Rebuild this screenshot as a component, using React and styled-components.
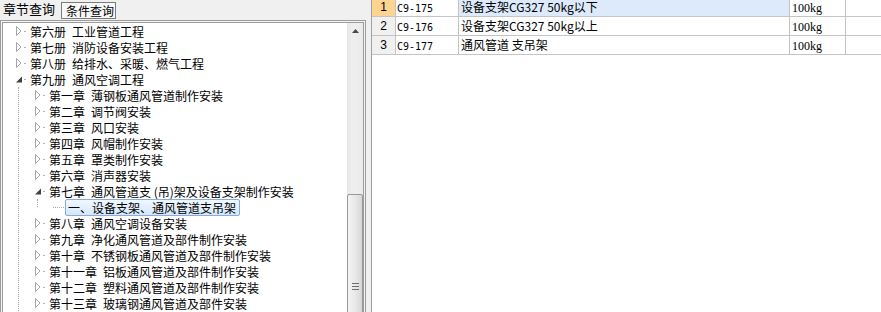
import React from "react";
import styled, { createGlobalStyle } from "styled-components";

const GlobalStyle = createGlobalStyle`
  html, body { margin: 0; padding: 0; background: #fff; }
  body {
    font-family: "Noto Sans CJK SC", sans-serif;
    font-size: 12px;
    color: #000;
  }
`;

const Screen = styled.div`
  display: flex;
  width: 881px;
  height: 312px;
  overflow: hidden;
  background: #f0f0f0;
`;

/* ---- left side: tabs + tree ---- */

const LeftPane = styled.div`
  width: 366px;
  flex-shrink: 0;
  display: flex;
  flex-direction: column;
`;

const TabStrip = styled.div`
  height: 20px;
  display: flex;
  align-items: flex-start;
  background: #f0f0f0;
`;

const Tab = styled.div`
  box-sizing: border-box;
  white-space: nowrap;
  ${(p) =>
    p.$active
      ? `
    width: 58px;
    height: 20px;
    padding-left: 3px;
    font-size: 13px;
    line-height: 18px;
  `
      : `
    width: 55px;
    height: 17px;
    margin: 2px 0 0 3px;
    padding-left: 4px;
    border: 1px solid #7c7c7c;
    background: #f8f8f8;
    font-size: 12px;
    line-height: 15px;
  `}
`;

const TreeFrame = styled.div`
  box-sizing: border-box;
  height: 320px;
  border: 1px solid #9c9c9c;
  padding: 1px;
  background: #f4f4f4;
`;

const TreeInner = styled.div`
  box-sizing: border-box;
  height: 100%;
  border: 1px solid #9c9c9c;
  background: #fff;
  display: flex;
`;

const TreeList = styled.div`
  flex: 1;
  min-width: 0;
`;

const Children = styled.div`
  position: relative;
  &::before {
    content: "";
    position: absolute;
    left: ${(p) => 15 + (p.$level - 1) * 19}px;
    top: 0;
    height: ${(p) => (p.$short ? "8px" : "100%")};
    border-left: 1px dotted #a8a8a8;
  }
`;

const Row = styled.div`
  height: 16px;
  display: flex;
  align-items: center;
  padding-left: ${(p) => 11 + (p.$level - 1) * 19}px;
  white-space: nowrap;
`;

const Expander = styled.span`
  width: 10px;
  height: 16px;
  flex-shrink: 0;
  display: flex;
  align-items: center;
  position: relative;
`;

const LeafLine = styled.span`
  position: absolute;
  left: 1px;
  right: -2px;
  top: 8px;
  border-top: 1px dotted #a8a8a8;
`;

const Connector = styled.span`
  width: 2px;
  height: 1px;
  flex-shrink: 0;
  margin-right: 1px;
  background: ${(p) => (p.$hidden ? "none" : "#b0b0b0")};
`;

const Label = styled.span`
  box-sizing: border-box;
  height: 17px;
  line-height: 15px;
  padding: 0 3px 0 2px;
  border: 1px solid ${(p) => (p.$selected ? "#84acdd" : "transparent")};
  border-radius: 2px;
  background: ${(p) =>
    p.$selected ? "linear-gradient(#f1f7fe, #d5e7fb)" : "transparent"};
`;

const ScrollBar = styled.div`
  width: 16px;
  flex-shrink: 0;
  display: flex;
  flex-direction: column;
  align-items: stretch;
  background: linear-gradient(to right, #e6e6e6, #efefef 40%, #ebebeb);
`;

const ArrowBox = styled.div`
  height: 16px;
  display: flex;
  justify-content: center;
  align-items: center;
`;

const Thumb = styled.div`
  box-sizing: border-box;
  margin-top: 155px;
  height: 140px;
  border: 1px solid #979797;
  border-radius: 2px;
  background: linear-gradient(to right, #f4f4f4, #e8e8e8 50%, #d7d7d7);
  display: flex;
  justify-content: center;
  padding-top: 82px;
`;

/* ---- right side: data grid ---- */

const Splitter = styled.div`
  width: 5px;
  flex-shrink: 0;
  background: #f0f0f0;
`;

const Grid = styled.div`
  flex: 1;
  background: #fff;
  border-left: 1px solid #a0a0a0;
`;

const GridBody = styled.div`
  margin-top: -2px;
`;

const GridRow = styled.div`
  display: grid;
  grid-template-columns: 24px 63px 331px 56px 1fr;
  height: 19px;
`;

const Cell = styled.div`
  box-sizing: border-box;
  height: 19px;
  border-bottom: 1px solid #c4c4c4;
  border-right: ${(p) => (p.$last ? "none" : "1px solid #c4c4c4")};
  padding-left: ${(p) => p.$pad || 1}px;
  line-height: 18px;
  white-space: nowrap;
  overflow: hidden;
  background: ${(p) => p.$bg || "#fff"};
`;

const NumCell = styled(Cell)`
  text-align: center;
  padding-left: 0;
  font-family: "Liberation Sans", sans-serif;
  font-size: 12px;
  background: ${(p) => (p.$selected ? "#fed491" : "#f0f0f0")};
`;

const CodeText = styled.span`
  font-family: "DejaVu Sans Mono", monospace;
  font-size: 10px;
`;

const UnitText = styled.span`
  font-family: "Liberation Serif", serif;
  font-size: 12px;
`;

/* ---- icons ---- */

function Collapsed() {
  return (
    <svg width="10" height="16" viewBox="0 0 10 16">
      <polygon points="2.5,3.5 7,8 2.5,12.5" fill="#fff" stroke="#a6a6a6" strokeWidth="1" />
    </svg>
  );
}

function Expanded() {
  return (
    <svg width="10" height="16" viewBox="0 0 10 16">
      <polygon points="8,5.5 8,11.5 2,11.5" fill="#404040" />
    </svg>
  );
}

function UpArrow() {
  return (
    <svg width="7" height="4" viewBox="0 0 7 4">
      <polygon points="3.5,0 7,4 0,4" fill="#4a4a4a" />
    </svg>
  );
}

function Grip() {
  return (
    <svg width="7" height="8" viewBox="0 0 7 8">
      <rect x="0" y="0" width="7" height="1" fill="#6e6e6e" />
      <rect x="0" y="3" width="7" height="1" fill="#6e6e6e" />
      <rect x="0" y="6" width="7" height="1" fill="#6e6e6e" />
    </svg>
  );
}

/* ---- data ---- */

const chapters = [
  "第一章\u2002薄钢板通风管道制作安装",
  "第二章\u2002调节阀安装",
  "第三章\u2002风口安装",
  "第四章\u2002风帽制作安装",
  "第五章\u2002罩类制作安装",
  "第六章\u2002消声器安装",
];

const laterChapters = [
  "第八章\u2002通风空调设备安装",
  "第九章\u2002净化通风管道及部件制作安装",
  "第十章\u2002不锈钢板通风管道及部件制作安装",
  "第十一章\u2002铝板通风管道及部件制作安装",
  "第十二章\u2002塑料通风管道及部件制作安装",
  "第十三章\u2002玻璃钢通风管道及部件安装",
];

const books = [
  "第六册\u2002工业管道工程",
  "第七册\u2002消防设备安装工程",
  "第八册\u2002给排水、采暖、燃气工程",
];

const quotas = [
  { no: 1, code: "C9-175", name: "设备支架CG327\u00a050kg以下", unit: "100kg", selected: true },
  { no: 2, code: "C9-176", name: "设备支架CG327\u00a050kg以上", unit: "100kg" },
  { no: 3, code: "C9-177", name: "通风管道\u00a0支吊架", unit: "100kg" },
];

function TreeRow({ level, state, label, selected }) {
  return (
    <Row $level={level}>
      <Expander>
        {state === "collapsed" && <Collapsed />}
        {state === "expanded" && <Expanded />}
        {state === "leaf" && <LeafLine />}
      </Expander>
      <Connector $hidden={state === "leaf"} />
      <Label $selected={selected}>{label}</Label>
    </Row>
  );
}

export default function App() {
  return (
    <>
      <GlobalStyle />
      <Screen>
        <LeftPane>
          <TabStrip>
            <Tab $active>章节查询</Tab>
            <Tab>条件查询</Tab>
          </TabStrip>
          <TreeFrame>
            <TreeInner>
              <TreeList>
                {books.map((b) => (
                  <TreeRow key={b} level={1} state="collapsed" label={b} />
                ))}
                <TreeRow level={1} state="expanded" label={"第九册\u2002通风空调工程"} />
                <Children $level={1}>
                  {chapters.map((c) => (
                    <TreeRow key={c} level={2} state="collapsed" label={c} />
                  ))}
                  <TreeRow
                    level={2}
                    state="expanded"
                    label={"第七章\u2002通风管道支 (吊)架及设备支架制作安装"}
                  />
                  <Children $level={2} $short>
                    <TreeRow
                      level={3}
                      state="leaf"
                      selected
                      label="一、设备支架、通风管道支吊架"
                    />
                  </Children>
                  {laterChapters.map((c) => (
                    <TreeRow key={c} level={2} state="collapsed" label={c} />
                  ))}
                </Children>
              </TreeList>
              <ScrollBar>
                <ArrowBox>
                  <UpArrow />
                </ArrowBox>
                <Thumb>
                  <div>
                    <Grip />
                  </div>
                </Thumb>
              </ScrollBar>
            </TreeInner>
          </TreeFrame>
        </LeftPane>
        <Splitter />
        <Grid>
          <GridBody>
            {quotas.map((q) => (
              <GridRow key={q.no}>
                <NumCell $selected={q.selected}>{q.no}</NumCell>
                <Cell $pad={1}>
                  <CodeText>{q.code}</CodeText>
                </Cell>
                <Cell $pad={2} $bg={q.selected ? "#dceafc" : "#fff"}>
                  {q.name}
                </Cell>
                <Cell $pad={2}>
                  <UnitText>{q.unit}</UnitText>
                </Cell>
                <Cell $last />
              </GridRow>
            ))}
          </GridBody>
        </Grid>
      </Screen>
    </>
  );
}
